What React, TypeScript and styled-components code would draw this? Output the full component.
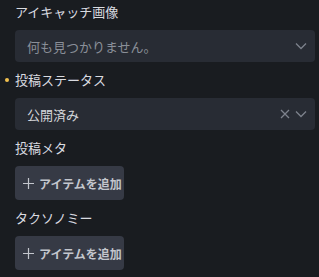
import styled, { createGlobalStyle } from 'styled-components'

const GlobalStyle = createGlobalStyle`
  html, body {
    margin: 0;
    background: #191c20;
  }
  body {
    font-family: 'Noto Sans CJK JP', 'Noto Sans', sans-serif;
    color: #d9dbe0;
  }
`

function ChevronDown() {
  return (
    <svg width="12" height="8" viewBox="0 0 12 8" fill="none">
      <path d="M1 1.5l5 5 5-5" stroke="#7d828c" strokeWidth="1.3" />
    </svg>
  )
}

function Cross() {
  return (
    <svg width="10" height="10" viewBox="0 0 10 10" fill="none">
      <path d="M1 1l8 8M9 1l-8 8" stroke="#7d828c" strokeWidth="1.3" />
    </svg>
  )
}

function Plus() {
  return (
    <svg width="11" height="11" viewBox="0 0 11 11" fill="none">
      <path d="M5.5 0v11M0 5.5h11" stroke="#c3c6cd" strokeWidth="1.2" />
    </svg>
  )
}

export default function App() {
  return (
    <>
      <GlobalStyle />
      <Panel>
        <Label>アイキャッチ画像</Label>
        <Select>
          <Value $muted>何も見つかりません。</Value>
          <Icons>
            <ChevronDown />
          </Icons>
        </Select>

        <Label $required>投稿ステータス</Label>
        <Select>
          <Value>公開済み</Value>
          <Icons>
            <Cross />
            <ChevronDown />
          </Icons>
        </Select>

        <Label>投稿メタ</Label>
        <AddButton>
          <Plus />
          アイテムを追加
        </AddButton>

        <Label>タクソノミー</Label>
        <AddButton>
          <Plus />
          アイテムを追加
        </AddButton>
      </Panel>
    </>
  )
}

const Panel = styled.div`
  display: flex;
  flex-direction: column;
  align-items: flex-start;
  gap: 9px;
  padding: 3px 4px 0 15px;
`

const Label = styled.div<{ $required?: boolean }>`
  position: relative;
  font-size: 13px;
  line-height: 18px;
  color: #d9dbe0;

  ${({ $required }) =>
    $required &&
    `
    &::before {
      content: '';
      position: absolute;
      left: -10px;
      top: 7px;
      width: 4px;
      height: 4px;
      border-radius: 50%;
      background: #f2c14e;
    }
  `}
`

const Select = styled.div`
  box-sizing: border-box;
  align-self: stretch;
  height: 32px;
  display: flex;
  align-items: center;
  justify-content: space-between;
  padding: 0 8px 0 12px;
  background: #282c34;
  border-radius: 4px;
`

const Value = styled.span<{ $muted?: boolean }>`
  font-size: 13px;
  color: ${({ $muted }) => ($muted ? '#8a8f98' : '#d4d6db')};
`

const Icons = styled.div`
  display: flex;
  align-items: center;
  gap: 5px;
`

const AddButton = styled.button`
  box-sizing: border-box;
  height: 34px;
  width: 109px;
  display: flex;
  align-items: center;
  gap: 5px;
  padding: 0 0 0 8px;
  border: none;
  border-radius: 4px;
  background: #363a45;
  color: #c3c6cd;
  font-family: inherit;
  font-size: 12px;
  font-weight: 700;
  white-space: nowrap;

  svg {
    flex-shrink: 0;
  }
`
